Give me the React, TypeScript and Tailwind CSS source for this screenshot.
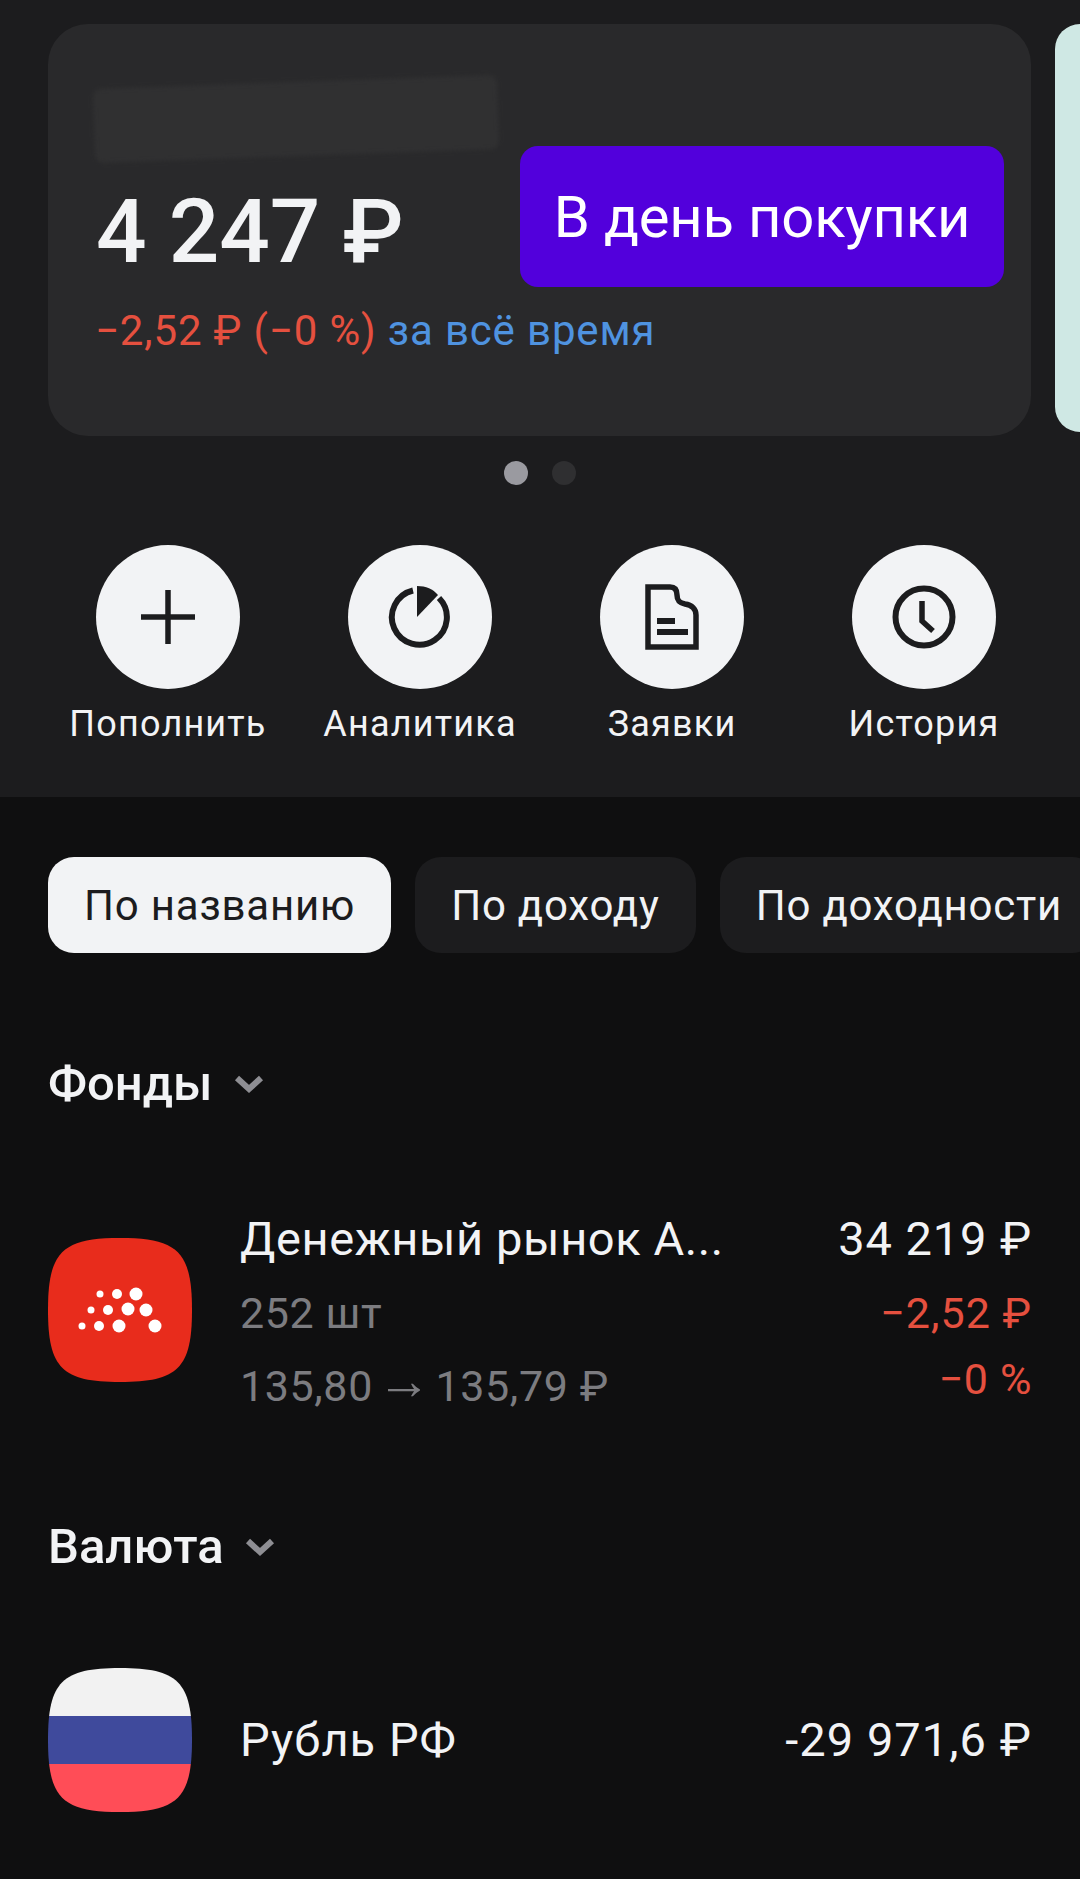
import React from 'react';

const font = { fontFamily: 'Roboto, "Noto Sans", sans-serif' };

const dots: [number, number, number][] = [
    [52, 56, 3.5], [69, 56, 5], [88, 56, 6.5],
    [43, 72, 3.5], [60, 72, 5], [80, 71, 6.5], [98, 72, 6.5],
    [34, 88, 3.5], [51, 88, 5], [71, 88, 6.5], [107, 88, 6.5],
];

const SQUIRCLE = 'M72 0C130 0 144 14 144 72C144 130 130 144 72 144C14 144 0 130 0 72C0 14 14 0 72 0Z';

const PlusIcon = () => (
    <svg width="60" height="60" viewBox="0 0 60 60" className="text-[#1c1c1e]">
        <path d="M30 3V57M3 30H57" stroke="currentColor" strokeWidth="5.5" fill="none" />
    </svg>
);

const PieIcon = () => (
    <svg width="64" height="64" viewBox="0 0 64 64" className="text-[#1c1c1e]">
        <path d="M25 5.5A27.5 27.5 0 1 0 51 13" stroke="currentColor" strokeWidth="6" fill="none" />
        <path d="M29 1C38 1 45 4 50 10L29 32Z" fill="currentColor" />
    </svg>
);

const DocIcon = () => (
    <svg width="64" height="72" viewBox="0 0 64 72" className="text-[#1c1c1e]">
        <path
            d="M8 6H30C35 6 37 9 37 14C37 20 40 22 45 23C52 24 56 28 56 34V66H8Z"
            stroke="currentColor"
            strokeWidth="5.5"
            fill="none"
        />
        <path d="M17 40H35M17 51H48" stroke="currentColor" strokeWidth="6" fill="none" />
    </svg>
);

const ClockIcon = () => (
    <svg width="64" height="64" viewBox="0 0 64 64" className="text-[#1c1c1e]">
        <circle cx="32" cy="32" r="28.5" stroke="currentColor" strokeWidth="6" fill="none" />
        <path d="M30 16V36L41 46" stroke="currentColor" strokeWidth="5.5" fill="none" />
    </svg>
);

const Chevron = () => (
    <svg width="30" height="20" viewBox="0 0 30 20" className="text-[#8e8e93]">
        <path d="M3 4L15 15L27 4" stroke="currentColor" strokeWidth="6" fill="none" />
    </svg>
);

const actions = [
    { label: 'Пополнить', icon: PlusIcon },
    { label: 'Аналитика', icon: PieIcon },
    { label: 'Заявки', icon: DocIcon },
    { label: 'История', icon: ClockIcon },
];

export default function App() {
    return (
        <div style={font} className="w-[1080px] h-[1879px] overflow-hidden bg-[#0f0f10] text-[#f2f3f5]">
            <div className="h-[797px] bg-[#1c1c1e] pt-6">
                <div className="flex gap-6 pl-12">
                    <div className="relative w-[983px] h-[412px] shrink-0 rounded-[40px] bg-[#29292b]">
                        <div className="absolute left-[46px] top-[58px] w-[404px] h-[74px] -rotate-2 rounded-lg bg-[#303031] blur-[2px]" />
                        <div className="flex justify-between pt-[122px] pl-[48px] pr-[27px]">
                            <div className="pt-[36px] text-[89px] leading-[100px] font-medium">4 247 ₽</div>
                            <div className="flex w-[484px] h-[141px] items-center justify-center rounded-[18px] bg-[#5200dc] text-[58px] leading-none tracking-[-0.2px] text-white">
                                В день покупки
                            </div>
                        </div>
                        <div className="pl-[47px] pt-[19px] text-[42px] leading-[50px] tracking-[0.85px]">
                            <span className="text-[#e5503f]">−2,52 ₽ (−0 %)</span>{' '}
                            <span className="text-[#4f93e0]">за всё время</span>
                        </div>
                    </div>
                    <div className="h-[408px] grow rounded-l-[40px] bg-[#cfe8e4]" />
                </div>
                <div className="flex justify-center gap-6 pt-[25px]">
                    <div className="w-6 h-6 rounded-full bg-[#9a9aa0]" />
                    <div className="w-6 h-6 rounded-full bg-[#2f2f31]" />
                </div>
                <div className="flex pl-[42px] pt-[60px]">
                    {actions.map(({ label, icon: Icon }) => (
                        <div key={label} className="flex w-[252px] flex-col items-center">
                            <div className="flex w-[144px] h-[144px] items-center justify-center rounded-full bg-[#f2f3f5]">
                                <Icon />
                            </div>
                            <div className="mt-[13px] whitespace-nowrap text-[36px] leading-[44px] tracking-[1.2px]">{label}</div>
                        </div>
                    ))}
                </div>
            </div>

            <div className="flex gap-6 pl-12 pt-[60px] text-[42px] leading-none whitespace-nowrap tracking-[0.8px]">
                <div className="flex h-[96px] shrink-0 items-center rounded-[26px] bg-[#f2f3f5] px-9 pt-[2px] text-[#1c1c1e]">По названию</div>
                <div className="flex h-[96px] shrink-0 items-center rounded-[26px] bg-[#1c1c1e] px-9 pt-[2px]">По доходу</div>
                <div className="flex h-[96px] shrink-0 items-center rounded-[26px] bg-[#1c1c1e] px-9 pt-[2px]">По доходности</div>
            </div>

            <div className="flex items-center gap-[21px] pl-12 pt-[105px] text-[49px] leading-[51px] font-medium">
                Фонды <Chevron />
            </div>

            <div className="flex h-[144px] mt-[129px] pl-12 pr-12">
                <svg width="144" height="144" viewBox="0 0 144 144" className="shrink-0">
                    <path d={SQUIRCLE} fill="#e82c1c" />
                    {dots.map(([cx, cy, r]) => (
                        <circle key={`${cx}-${cy}`} cx={cx} cy={cy} r={r} fill="#fff" />
                    ))}
                </svg>
                <div className="ml-12 flex-1 -mt-[27px]">
                    <div className="flex justify-between text-[47px] leading-[56px] tracking-[0.6px]">
                        <span>Денежный рынок А...</span>
                        <span className="tracking-[0.9px]">34 219 ₽</span>
                    </div>
                    <div className="flex justify-between pt-[21px] text-[43px] leading-[50px] tracking-[0.6px]">
                        <span className="text-[#7c7c80]">252 шт</span>
                        <span className="tracking-[1px] text-[#e5503f]">−2,52 ₽</span>
                    </div>
                    <div className="flex justify-between pt-[23px] text-[43px] leading-[50px] tracking-[0.6px]">
                        <div className="flex items-center gap-[4px] text-[#7c7c80]">
                            <span>135,80</span>
                            <span className="-mt-[10px] text-[54px] leading-none">→</span>
                            <span>135,79 ₽</span>
                        </div>
                        <span className="-mt-[7px] text-[#e5503f]">−0 %</span>
                    </div>
                </div>
            </div>

            <div className="flex items-center gap-[21px] pl-12 pt-[139px] text-[49px] leading-[52px] font-medium">
                Валюта <Chevron />
            </div>

            <div className="flex items-center pl-12 pr-12 pt-[95px]">
                <svg width="144" height="144" viewBox="0 0 144 144" className="shrink-0">
                    <clipPath id="flag-clip">
                        <path d={SQUIRCLE} />
                    </clipPath>
                    <g clipPath="url(#flag-clip)">
                        <rect width="144" height="48" fill="#f2f2f2" />
                        <rect y="48" width="144" height="48" fill="#3f4a9c" />
                        <rect y="96" width="144" height="48" fill="#ff4d57" />
                    </g>
                </svg>
                <div className="ml-12 flex flex-1 justify-between text-[47px] leading-[56px] tracking-[1.05px]">
                    <span>Рубль РФ</span>
                    <span>-29 971,6 ₽</span>
                </div>
            </div>
        </div>
    );
}
